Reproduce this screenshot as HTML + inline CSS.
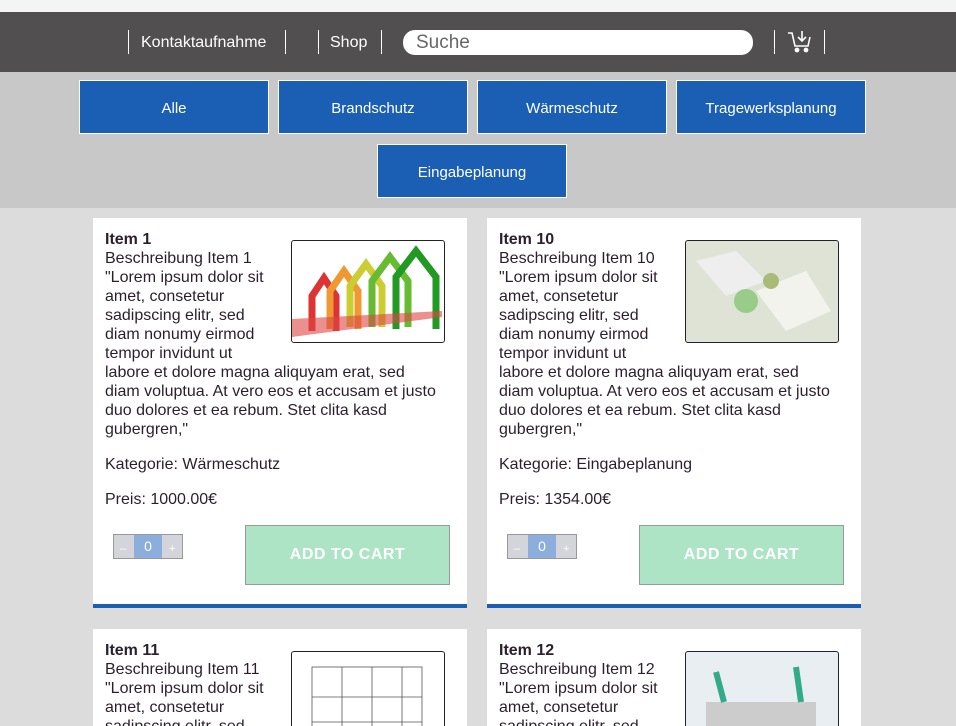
<!DOCTYPE html>
<html><head><meta charset="utf-8"><style>
html,body{margin:0;width:956px;height:726px;overflow:hidden}
body{background:#dcdcdc;font-family:"Liberation Sans",sans-serif;position:relative}
.top{position:absolute;left:0;top:0;width:956px;height:12px;background:#f4f4f4}
.nav{position:absolute;left:0;top:12px;width:956px;height:60px;background:#514f50;color:#fff}
.sep{position:absolute;top:18px;width:1px;height:24px;background:#fff}
.nav .t{position:absolute;top:22px;font-size:16px}
.search{position:absolute;left:403px;top:18px;width:350px;height:25px;background:#fff;border-radius:12px;color:#666;font-size:19px;line-height:25px;padding-left:13px;box-sizing:border-box}
.filt{position:absolute;left:0;top:72px;width:956px;height:136px;background:#c8c8c8}
.btn{position:absolute;width:188px;height:52px;background:#1a5fb4;border:1px solid #fff;color:#fff;font-size:15px;text-align:center;line-height:55px}
.card{position:absolute;width:374px;height:386px;background:#fff;border-bottom:4px solid #1a5fb4;color:#2a1f2a;font-size:16px;line-height:19px;overflow:hidden}
.card.b{height:97px;border-bottom:0}
.card .in{position:absolute;left:12px;top:12px;width:350px}
.img{position:absolute;left:198px;top:22px;width:152px;height:101px;border:1px solid #222;border-radius:3px;overflow:hidden;background:#fff}
.qty{position:absolute;left:20px;top:316px;width:68px;height:23px;border:1px solid #999;background:#d4d5da;color:#fff;font-size:11px}
.qty .m{position:absolute;left:20px;top:0;width:28px;height:23px;background:#8caedd;text-align:center;line-height:23px;font-size:14px}
.add{position:absolute;left:152px;top:307px;width:203px;height:58px;border:1px solid #999;background:#aee4c6;color:#fff;font-weight:bold;font-size:16px;text-align:center;line-height:58px;letter-spacing:.5px}
</style></head><body>
<div class="top"></div>
<div class="nav">
<div class="sep" style="left:128px"></div><div class="t" style="left:141px">Kontaktaufnahme</div><div class="sep" style="left:285px"></div>
<div class="sep" style="left:318px"></div><div class="t" style="left:330px">Shop</div><div class="sep" style="left:381px"></div>
<div class="search">Suche</div>
<div class="sep" style="left:774px"></div>
<svg style="position:absolute;left:787px;top:18px" width="26" height="24" viewBox="0 0 26 24" fill="none" stroke="#fff" stroke-width="1.6"><path d="M1 3h4l3 13h13l2-9"/><path d="M15 1v10M11 7l4 4 4-4"/><circle cx="10" cy="20" r="1.6" fill="#fff"/><circle cx="19" cy="20" r="1.6" fill="#fff"/></svg>
<div class="sep" style="left:824px"></div>
</div>
<div class="filt">
<div class="btn" style="left:79px;top:8px">Alle</div>
<div class="btn" style="left:278px;top:8px">Brandschutz</div>
<div class="btn" style="left:477px;top:8px">Wärmeschutz</div>
<div class="btn" style="left:676px;top:8px">Tragewerksplanung</div>
<div class="btn" style="left:377px;top:72px">Eingabeplanung</div>
</div>

<div class="card" style="left:93px;top:218px">
<div class="img"><svg width="152" height="101"><g stroke-width="7" fill="none"><path d="M20 90V55l12-18 12 18v35" stroke="#d33"/><path d="M38 88V50l14-20 14 20v38" stroke="#e93"/><path d="M58 86V45l16-22 16 22v41" stroke="#cc3"/><path d="M80 86V40l18-24 18 24v46" stroke="#6b3"/><path d="M104 88V36l20-26 20 26v52" stroke="#292"/></g><path d="M0 78l150-8v6L0 96z" fill="#d44" opacity=".6"/></svg></div>
<div class="in"><b>Item 1</b><br>Beschreibung Item 1<br>"Lorem ipsum dolor sit<br>amet, consetetur<br>sadipscing elitr, sed<br>diam nonumy eirmod<br>tempor invidunt ut<br>labore et dolore magna aliquyam erat, sed<br>diam voluptua. At vero eos et accusam et justo<br>duo dolores et ea rebum. Stet clita kasd<br>gubergren,"<br><div style="height:16px"></div>Kategorie: Wärmeschutz<br><div style="height:16px"></div>Preis: 1000.00€</div>
<div class="qty"><span style="position:absolute;left:6px;top:5px">–</span><div class="m">0</div><span style="position:absolute;left:55px;top:5px">+</span></div>
<div class="add">ADD TO CART</div>
</div>

<div class="card" style="left:487px;top:218px">
<div class="img" style="background:#dfe3d6"><svg width="152" height="101"><path d="M10 20l40-10 30 30-40 15z" fill="#eee"/><path d="M70 50l50-20 25 40-45 20z" fill="#f3f3ee"/><circle cx="60" cy="60" r="12" fill="#9c8"/><circle cx="85" cy="40" r="8" fill="#ab7"/></svg></div>
<div class="in"><b>Item 10</b><br>Beschreibung Item 10<br>"Lorem ipsum dolor sit<br>amet, consetetur<br>sadipscing elitr, sed<br>diam nonumy eirmod<br>tempor invidunt ut<br>labore et dolore magna aliquyam erat, sed<br>diam voluptua. At vero eos et accusam et justo<br>duo dolores et ea rebum. Stet clita kasd<br>gubergren,"<br><div style="height:16px"></div>Kategorie: Eingabeplanung<br><div style="height:16px"></div>Preis: 1354.00€</div>
<div class="qty"><span style="position:absolute;left:6px;top:5px">–</span><div class="m">0</div><span style="position:absolute;left:55px;top:5px">+</span></div>
<div class="add">ADD TO CART</div>
</div>

<div class="card b" style="left:93px;top:629px">
<div class="img"><svg width="152" height="101" stroke="#555" fill="none" stroke-width=".8"><rect x="20" y="15" width="110" height="80"/><path d="M50 15v80M80 15v80M110 15v80M20 45h110M20 70h110"/></svg></div>
<div class="in"><b>Item 11</b><br>Beschreibung Item 11<br>"Lorem ipsum dolor sit<br>amet, consetetur<br>sadipscing elitr, sed</div>
</div>
<div class="card b" style="left:487px;top:629px">
<div class="img" style="background:#e8eef2"><svg width="152" height="101"><rect x="20" y="50" width="110" height="50" fill="#ccc"/><path d="M30 20l8 30M110 15l5 35" stroke="#3a8" stroke-width="6"/></svg></div>
<div class="in"><b>Item 12</b><br>Beschreibung Item 12<br>"Lorem ipsum dolor sit<br>amet, consetetur<br>sadipscing elitr, sed</div>
</div>
</body></html>
